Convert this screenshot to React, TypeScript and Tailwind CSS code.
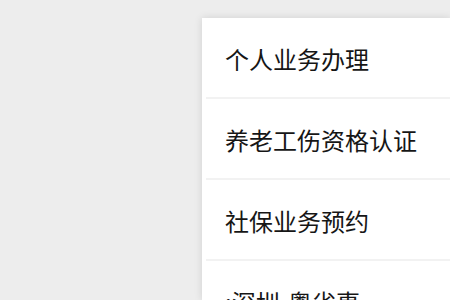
const items = ['个人业务办理', '养老工伤资格认证', '社保业务预约', ':深圳-粤省事'];

export default function App() {
  return (
    <div
      className="h-[300px] w-[450px] overflow-hidden bg-[#ededed] flex justify-end pt-[18px]"
      style={{ fontFamily: '"Noto Sans CJK SC", "Noto Sans", sans-serif' }}
    >
      <div className="w-[248px] bg-white shadow-[0_0_8px_rgba(0,0,0,0.12)] flex flex-col">
        {items.map((label) => (
          <div key={label} className="ml-1 h-[81px] shrink-0 border-b-2 border-[#f2f2f2] flex items-center pl-[19px] pt-[2px]">
            <span className="text-[24px] leading-none text-[#161616] whitespace-nowrap">{label}</span>
          </div>
        ))}
      </div>
    </div>
  );
}
